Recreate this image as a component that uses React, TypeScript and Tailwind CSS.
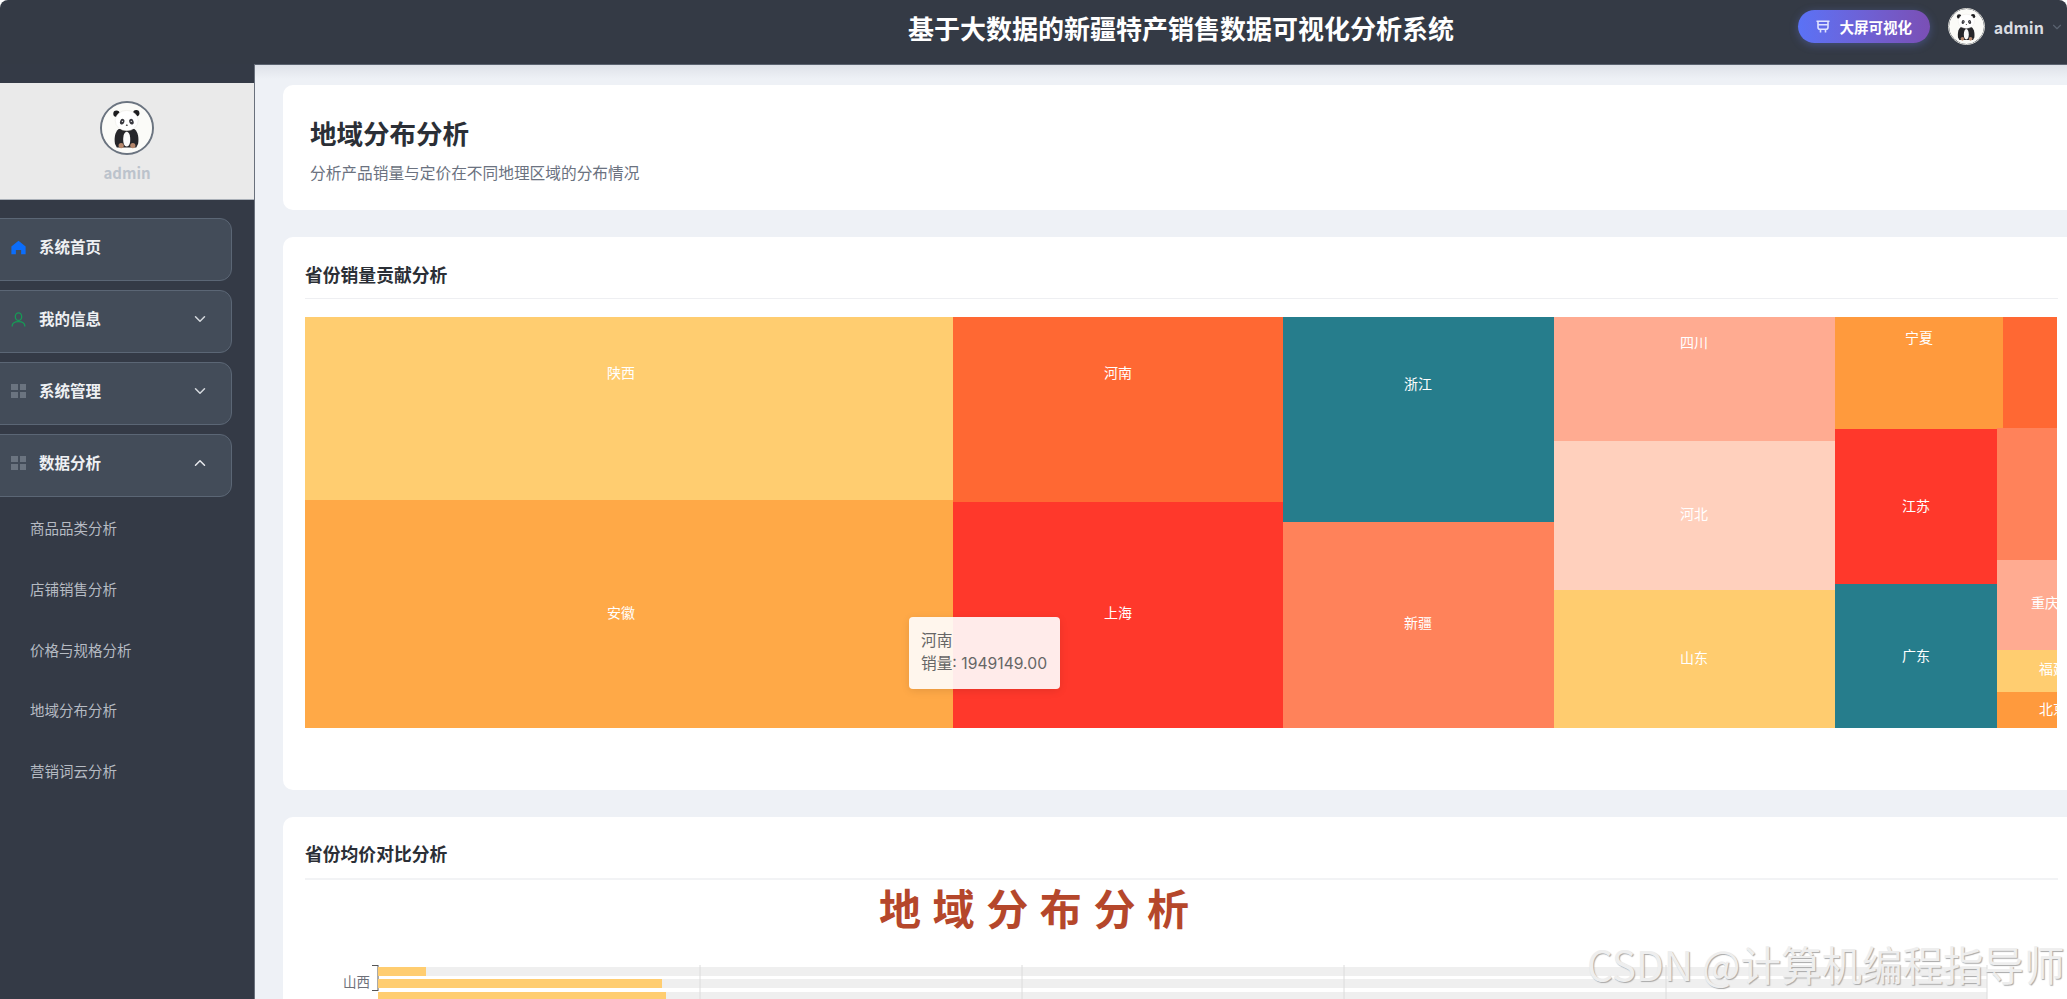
import React from "react";
import { ChevronDown, ChevronUp } from "lucide-react";

function Panda({ className }: { className?: string }) {
  return (
    <svg viewBox="0 0 54 54" className={className}>
      <circle cx="27" cy="27" r="27" fill="#fbfbf8" />
      <circle cx="15.6" cy="11.6" r="3.4" fill="#1c1c1e" />
      <circle cx="37" cy="11" r="3.4" fill="#1c1c1e" />
      <path d="M18 28c-4 3-5 10-4 16l2 4h21l2-4c1-6 0-13-4-16z" fill="#26262a" />
      <path d="M26.7 31c-2.6 0-3.8 4-3.8 8.5s1.2 7.5 3.8 7.5 3.8-3 3.8-7.5-1.2-8.5-3.8-8.5z" fill="#fafafa" />
      <ellipse cx="26.7" cy="19" rx="12.4" ry="11" fill="#ffffff" stroke="#e6e4de" strokeWidth="0.5" />
      <ellipse cx="21.8" cy="20.2" rx="2.3" ry="3.1" fill="#3a3a40" transform="rotate(20 21.8 20.2)" />
      <ellipse cx="31.8" cy="20.2" rx="2.3" ry="3.1" fill="#3a3a40" transform="rotate(-20 31.8 20.2)" />
      <circle cx="22" cy="19.8" r="0.7" fill="#fff" />
      <circle cx="31.6" cy="19.8" r="0.7" fill="#fff" />
      <ellipse cx="26.8" cy="24" rx="1.1" ry="0.7" fill="#222" />
      <circle cx="20.7" cy="46" r="2.8" fill="#b5866b" />
      <circle cx="33.3" cy="46" r="2.8" fill="#b5866b" />
    </svg>
  );
}

function HomeIcon() {
  return (
    <svg viewBox="0 0 16 16" className="h-[15px] w-[15px] shrink-0">
      <path d="M8 .8 15.6 7v8.2h-4.8v-4.6H5.2v4.6H.4V7z" fill="#0b6dfb" />
    </svg>
  );
}

function UserIcon() {
  return (
    <svg viewBox="0 0 16 16" fill="none" stroke="#179a56" strokeWidth="1.4" className="h-[15px] w-[15px] shrink-0">
      <ellipse cx="8" cy="5" rx="3.4" ry="4" />
      <path d="M1.2 15.4c0-3.6 2.6-5.2 6.8-5.2s6.8 1.6 6.8 5.2" />
    </svg>
  );
}

function GridIcon() {
  return (
    <div className="grid h-[14px] w-[15px] shrink-0 grid-cols-2 gap-[2px]">
      <span className="bg-[#6b7480]" />
      <span className="bg-[#6b7480]" />
      <span className="bg-[#6b7480]" />
      <span className="bg-[#6b7480]" />
    </div>
  );
}

function NavItem({ icon, label, chevron }: { icon: React.ReactNode; label: string; chevron?: "down" | "up" }) {
  return (
    <div className="-ml-3 flex h-[63px] w-[244px] items-center rounded-xl border border-[#5b6675] bg-[#434c59] pb-[5px] pl-[22px] pr-[22px]">
      {icon}
      <span className="ml-[13px] text-[15.5px] font-bold text-[#eef0f3]">{label}</span>
      {chevron === "down" && <ChevronDown className="ml-auto text-[#d5d9de]" size={18} />}
      {chevron === "up" && <ChevronUp className="ml-auto text-[#e8eaee]" size={18} />}
    </div>
  );
}

const subItems = ["商品品类分析", "店铺销售分析", "价格与规格分析", "地域分布分析", "营销词云分析"];

const cells = [
  { x: 305, y: 317, w: 648, h: 183, fill: "#ffcd70", label: "陕西", lx: 621, ly: 372 },
  { x: 305, y: 500, w: 648, h: 228, fill: "#ffa947", label: "安徽", lx: 621, ly: 612 },
  { x: 953, y: 317, w: 330, h: 185, fill: "#ff6833", label: "河南", lx: 1118, ly: 372 },
  { x: 953, y: 502, w: 330, h: 226, fill: "#ff382b", label: "上海", lx: 1118, ly: 612 },
  { x: 1283, y: 317, w: 271, h: 205, fill: "#267d8c", label: "浙江", lx: 1418, ly: 383 },
  { x: 1283, y: 522, w: 271, h: 206, fill: "#ff825a", label: "新疆", lx: 1418, ly: 622 },
  { x: 1554, y: 317, w: 281, h: 124, fill: "#ffab91", label: "四川", lx: 1694, ly: 342 },
  { x: 1554, y: 441, w: 281, h: 149, fill: "#ffd0bd", label: "河北", lx: 1694, ly: 513 },
  { x: 1554, y: 590, w: 281, h: 138, fill: "#ffcc6f", label: "山东", lx: 1694, ly: 657 },
  { x: 1835, y: 317, w: 168, h: 112, fill: "#ff9a3d", label: "宁夏", lx: 1919, ly: 337 },
  { x: 2003, y: 317, w: 54, h: 111, fill: "#ff6833", label: "", lx: 0, ly: 0 },
  { x: 1835, y: 429, w: 162, h: 155, fill: "#ff382b", label: "江苏", lx: 1916, ly: 505 },
  { x: 1835, y: 584, w: 162, h: 144, fill: "#267d8c", label: "广东", lx: 1916, ly: 655 },
  { x: 1997, y: 428, w: 60, h: 132, fill: "#ff825a", label: "", lx: 0, ly: 0 },
  { x: 1997, y: 560, w: 60, h: 90, fill: "#ffab91", label: "重庆", lx: 2045, ly: 602 },
  { x: 1997, y: 650, w: 60, h: 42, fill: "#ffcd70", label: "福建", lx: 2053, ly: 668 },
  { x: 1997, y: 692, w: 60, h: 36, fill: "#ff9a3d", label: "北京", lx: 2053, ly: 708 },
];

function Treemap() {
  return (
    <svg viewBox="305 317 1752 411" className="block h-[411px] w-[1752px]">
      <defs>
        <clipPath id="edge">
          <rect x="305" y="317" width="1752" height="411" />
        </clipPath>
      </defs>
      <g clipPath="url(#edge)">
        {cells.map((c, i) => (
          <g key={i}>
            <rect x={c.x} y={c.y} width={c.w} height={c.h} fill={c.fill} />
            {c.label && (
              <text x={c.lx} y={c.ly} fill="#ffffff" fontSize="14" textAnchor="middle" dominantBaseline="central">
                {c.label}
              </text>
            )}
          </g>
        ))}
      </g>
    </svg>
  );
}

const bars = [
  { y: 87, end: 121 },
  { y: 99, end: 357 },
  { y: 112, end: 361 },
];

function PriceBars() {
  return (
    <svg viewBox="0 0 1753 121" className="block h-[121px] w-[1753px]">
      <path d="M67 85.5h6M73 85v26M67 110.5h6" stroke="#555" fill="none" />
      {bars.map((b) => (
        <g key={b.y}>
          <rect x="73" y={b.y} width="1609" height="9" fill="#efefef" />
          <rect x="73" y={b.y} width={b.end - 73} height="9" fill="#ffcd70" />
        </g>
      ))}
      {[395, 717, 1039, 1361, 1682].map((x) => (
        <line key={x} x1={x} x2={x} y1="85" y2="121" stroke="#dcdcdc" />
      ))}
      <text x="65" y="101" fill="#6e7079" fontSize="13.5" textAnchor="end" dominantBaseline="central">
        山西
      </text>
    </svg>
  );
}

export default function App() {
  return (
    <div className="relative flex h-[999px] w-[2067px] flex-col overflow-hidden bg-white font-['Noto_Sans_CJK_SC','Noto_Sans',sans-serif]">
      <header className="relative z-10 flex h-16 shrink-0 items-center rounded-t-lg bg-[#343a45]">
        <h1 className="ml-[908px] pb-[9px] text-[26px] font-bold whitespace-nowrap text-white">
          基于大数据的新疆特产销售数据可视化分析系统
        </h1>
        <div className="ml-auto flex items-center pb-[11px] pr-[3px]">
          <button className="flex h-[33px] w-[132px] items-center justify-center gap-[8px] rounded-full bg-gradient-to-r from-[#5a72f6] to-[#7a4fb5] text-[14.5px] font-bold text-white shadow-[0_2px_8px_rgba(102,126,234,0.35)]">
            <svg viewBox="0 0 16 16" fill="none" stroke="#dfe3ff" strokeWidth="1.6" className="h-4 w-4">
              <path d="M1.5 2.2h13M3 2.2v6a2 2 0 0 0 2 2h6a2 2 0 0 0 2-2v-6M3 5.8h10M5.5 10.5v3M10.5 10.5v3" />
            </svg>
            大屏可视化
          </button>
          <Panda className="ml-[18px] h-[37px] w-[37px] rounded-full border border-[#d6d6d2]" />
          <span className="ml-[9px] text-base font-semibold text-[#d9dce1]">admin</span>
          <ChevronDown className="ml-[6px] text-[#5a6370]" size={14} />
        </div>
      </header>

      <div className="flex min-h-0 flex-1">
        <aside className="w-[255px] shrink-0 border-r border-[#69707c] bg-[#343a46] pt-[19px]">
          <div className="flex h-[117px] flex-col items-center border-b border-[#aab0b8] bg-[#eaeaea] pt-[18px]">
            <Panda className="h-[54px] w-[54px] rounded-full border-2 border-[#6b7480]" />
            <span className="mt-[7px] text-[15px] leading-[22px] font-semibold text-[#bcc3cc]">admin</span>
          </div>
          <nav className="mt-[18px] flex flex-col gap-[9px]">
            <NavItem icon={<HomeIcon />} label="系统首页" />
            <NavItem icon={<UserIcon />} label="我的信息" chevron="down" />
            <NavItem icon={<GridIcon />} label="系统管理" chevron="down" />
            <NavItem icon={<GridIcon />} label="数据分析" chevron="up" />
          </nav>
          <ul className="mt-[1px]">
            {subItems.map((s) => (
              <li key={s} className="flex h-[60.6px] items-center pl-[30px] text-[14.5px] text-[#b6bbc3]">
                {s}
              </li>
            ))}
          </ul>
        </aside>

        <main className="relative min-w-0 flex-1 overflow-hidden border-t border-[#5b6370] bg-[#eef1f6] pl-[28px] pt-[20px]">
          <div className="absolute inset-x-0 top-0 h-[14px] bg-gradient-to-b from-[#dfe2e9] to-[#eef1f6]" />
          <section className="relative -mr-3 h-[125px] rounded-l-[10px] bg-white pl-[27px] pt-[29px]">
            <h2 className="text-[26.5px] leading-[38px] font-bold text-[#2b2f36]">地域分布分析</h2>
            <p className="mt-[9px] text-[15.7px] leading-[24px] text-[#6b7280]">
              分析产品销量与定价在不同地理区域的分布情况
            </p>
          </section>

          <section className="-mr-3 mt-[27px] h-[553px] rounded-l-[10px] bg-white pl-[22px] pt-[24px]">
            <div className="w-[1753px] border-b border-[#eeeff2] pb-[11px]">
              <h3 className="text-[17.8px] leading-[26px] font-bold text-[#2b2f36]">省份销量贡献分析</h3>
            </div>
            <div className="relative mt-[18px]">
              <Treemap />
              <div className="absolute left-[604px] top-[300px] h-[72px] w-[151px] rounded bg-white/90 pl-[12px] pt-[12px] font-['Inter','Noto_Sans_CJK_SC',sans-serif] text-[15.7px] leading-[23px] text-[#666666] shadow-[0_2px_8px_rgba(0,0,0,0.1)]">
                <div>河南</div>
                <div className="whitespace-nowrap">销量: 1949149.00</div>
              </div>
            </div>
          </section>

          <section className="relative -mr-3 mt-[27px] h-[300px] rounded-l-[10px] bg-white pl-[22px] pt-[23px]">
            <div className="w-[1753px] border-b-2 border-[#f2f3f5] pb-[12px]">
              <h3 className="text-[17.8px] leading-[26px] font-bold text-[#2b2f36]">省份均价对比分析</h3>
            </div>
            <PriceBars />
            <div className="absolute left-[596px] top-[65px] text-[42px] leading-[50px] font-bold tracking-[11.6px] whitespace-nowrap text-[#b5472b]">
              地域分布分析
            </div>
          </section>
        </main>
      </div>

      <div className="absolute left-[1587px] top-[939px] text-[40.5px] leading-[50px] whitespace-nowrap text-[#eeeeee] [text-shadow:1px_1px_1px_#a8a8a8]">
        CSDN @计算机编程指导师
      </div>
    </div>
  );
}
